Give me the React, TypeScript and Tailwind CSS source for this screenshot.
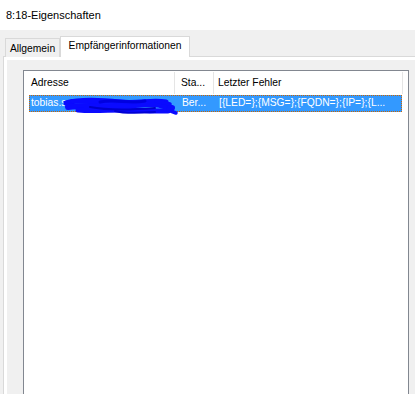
import React from "react";

export default function App() {
  return (
    <div className="relative w-[415px] h-[394px] overflow-hidden bg-[#f0f0f0] font-['Liberation_Sans',Arial,sans-serif] text-black">
      <div className="h-[30px] bg-white flex items-center pl-[6px] text-[11px] leading-none">
        8:18-Eigenschaften
      </div>
      <div className="pl-[3px] pt-[6px]">
        <div className="flex items-end h-[21px] relative">
          <div className="ml-[2px] w-[55px] h-[19px] border border-b-0 border-[#d9d9d9] bg-[#f0f0f0] flex items-center justify-center pt-[2px] text-[10.3px] leading-none">
            Allgemein
          </div>
          <div className="relative z-10 w-[130px] h-[21px] border border-b-0 border-[#d9d9d9] bg-white flex items-center justify-center pb-[1px] text-[10.3px] leading-none">
            Empfängerinformationen
          </div>
        </div>
        <div className="-mt-px w-[430px] h-[400px] border border-[#d9d9d9] bg-white p-[3px]">
          <div className="h-full bg-[#f0f0f0] pl-[16px] pt-[10px]">
            <div className="w-[386px] h-[380px] border border-[#828790] bg-white text-[10.3px] leading-none">
              <div className="flex h-[24px] items-stretch">
                <div className="w-[150px] pl-[7px] flex items-center">Adresse</div>
                <div className="w-px my-[1px] bg-[#e5e5e5]" />
                <div className="w-[38px] pl-[6px] flex items-center">Sta...</div>
                <div className="w-px my-[1px] bg-[#e5e5e5]" />
                <div className="w-[188px] pl-[4px] flex items-center">Letzter Fehler</div>
                <div className="w-px my-[1px] bg-[#e5e5e5]" />
              </div>
              <div className="ml-[5px] w-[373px] h-[17px] bg-[#3399ff] border border-dotted border-[#cc6600] flex items-center text-white">
                <div className="w-[145px] pl-[1px] whitespace-nowrap overflow-hidden">tobias.s</div>
                <div className="w-[39px] pl-[7px] whitespace-nowrap">Ber...</div>
                <div className="pl-[5px] whitespace-nowrap">[{"{"}LED={"}"};{"{"}MSG={"}"};{"{"}FQDN={"}"};{"{"}IP={"}"};{"{"}L...</div>
              </div>
            </div>
          </div>
        </div>
      </div>
      <svg
        className="absolute left-[60px] top-[95px]"
        width="125"
        height="22"
        viewBox="0 0 125 22"
        fill="none"
      >
        <g stroke="#0a0aff" strokeLinecap="round" strokeLinejoin="round">
          <path d="M6 8 C20 4 40 5 60 7 S 92 4 106 7" strokeWidth="5" />
          <path d="M8 12 C30 9 50 13 75 10 S 100 11 112 13" strokeWidth="6" />
          <path d="M18 15 C40 17 60 13 90 16 L108 16" strokeWidth="5" />
          <path d="M96 6 L110 9 L108 15 L116 18" strokeWidth="3.5" />
          <path d="M12 6 C30 8 50 5 75 8" strokeWidth="4" />
          <path d="M40 7 C55 4 70 9 85 6" strokeWidth="3" stroke="#0000e0" />
          <path d="M30 12 C45 15 70 15 95 13" strokeWidth="2" stroke="#0000cc" />
          <path d="M55 16 C65 19 80 18 95 17" strokeWidth="2" stroke="#0000d5" />
        </g>
      </svg>
    </div>
  );
}
